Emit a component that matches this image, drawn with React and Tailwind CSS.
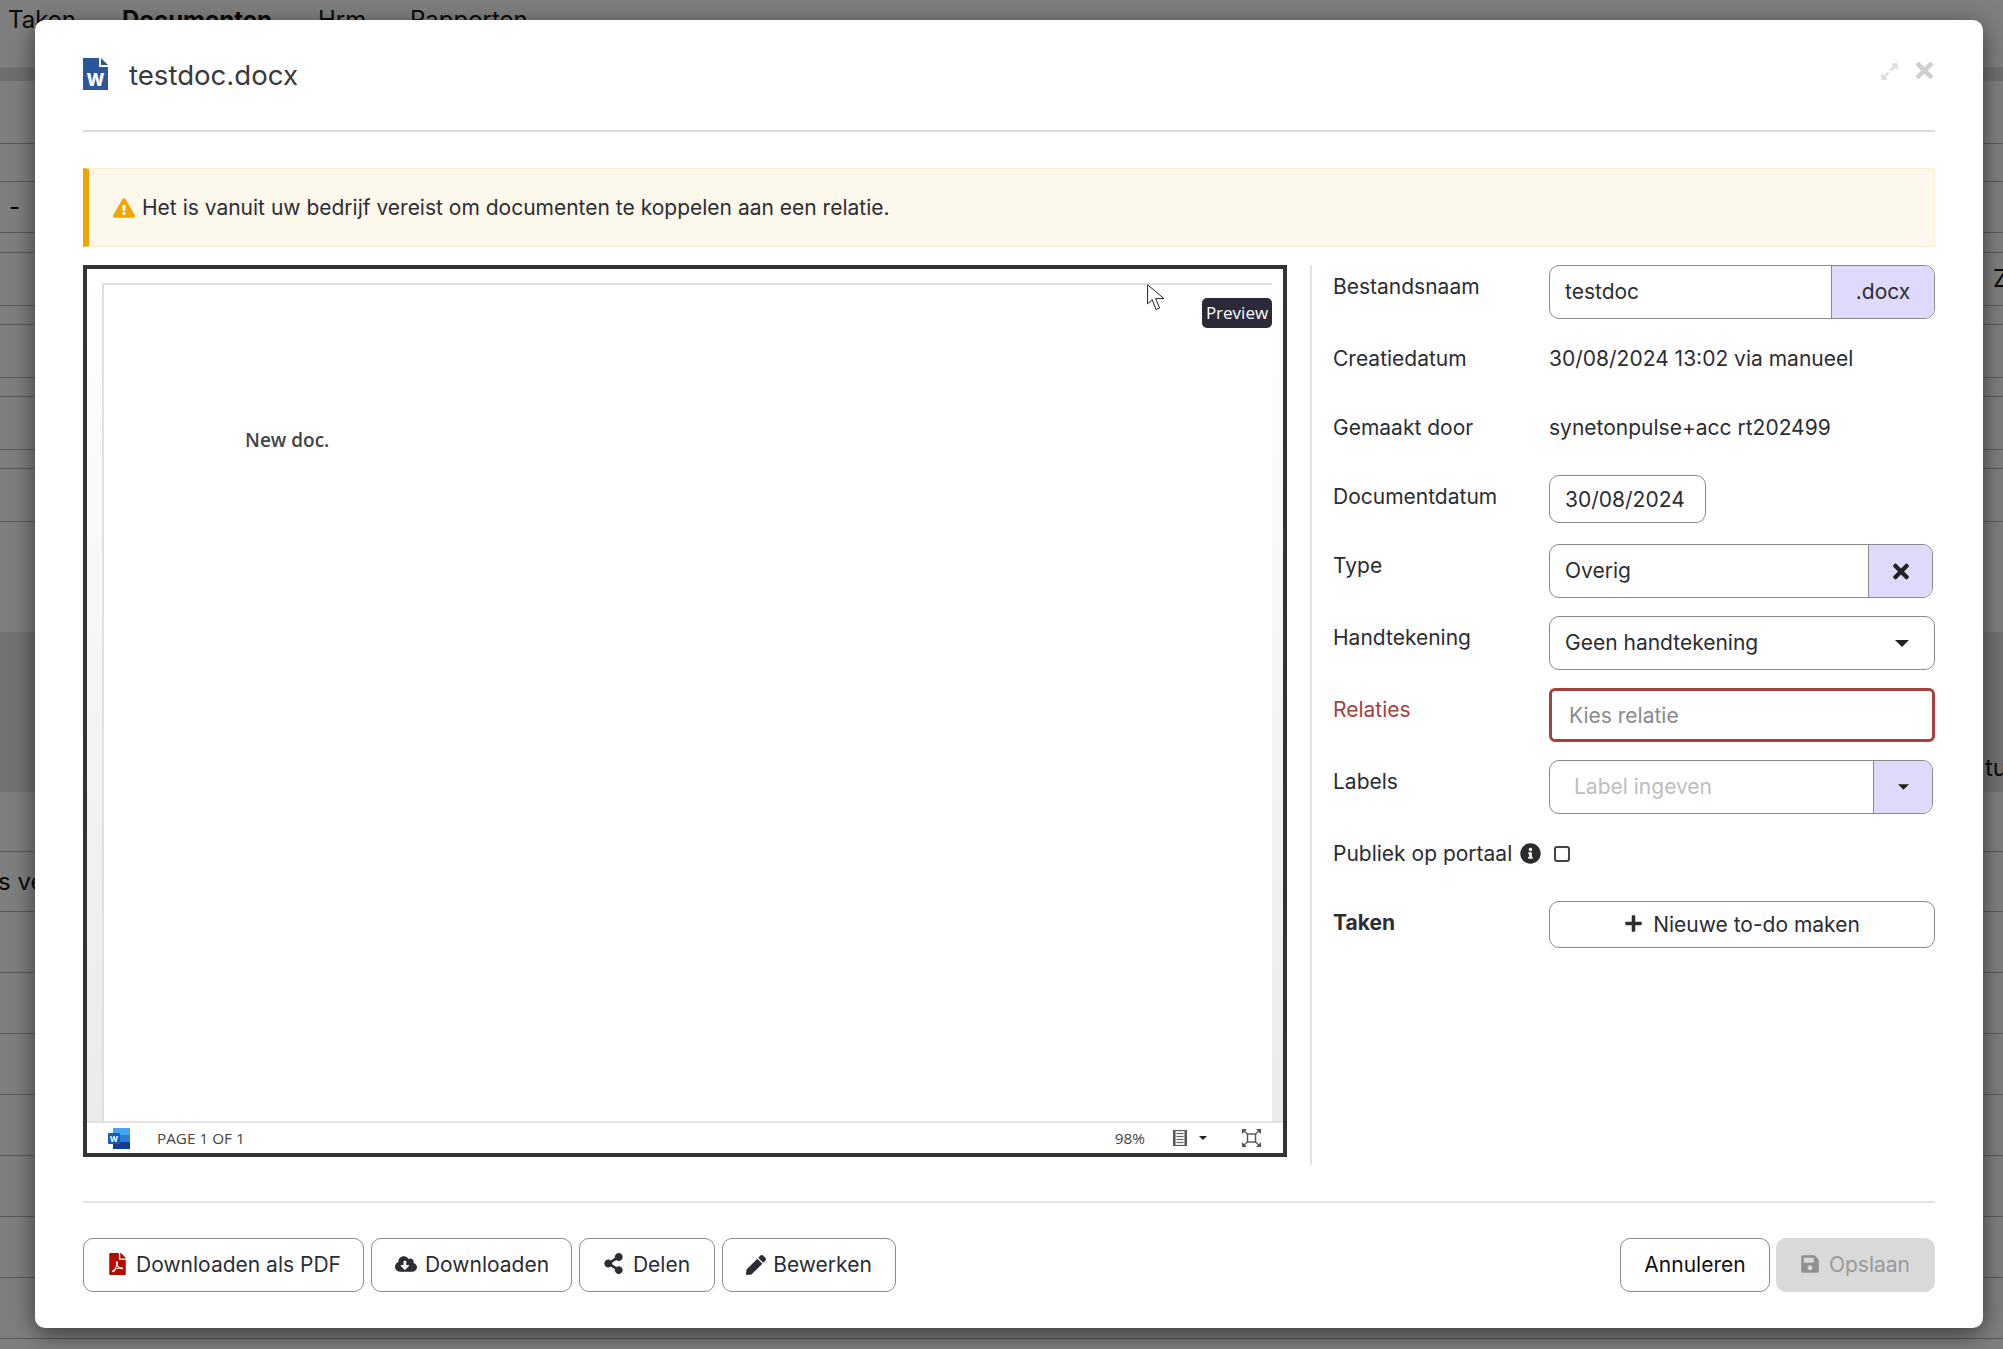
import {
  FaExclamationTriangle,
  FaExpandAlt,
  FaTimes,
  FaFilePdf,
  FaCloudDownloadAlt,
  FaShareAlt,
  FaPen,
  FaPlus,
  FaSave,
  FaInfoCircle,
} from "react-icons/fa";

// rows of the page behind the modal, only the outer edges stay visible
const backRows = [
  { h: "h-[63px]" },
  { h: "h-[38px]" },
  { h: "h-[51px]", left: "-   T", leftClass: "pl-[9px]" },
  { h: "h-[20px]" },
  { h: "h-[53px]", right: "Z", rightW: "w-[10px]" },
  { h: "h-[19px]" },
  { h: "h-[53px]" },
  { h: "h-[19px]" },
  { h: "h-[53px]" },
  { h: "h-[19px]" },
  { h: "h-[53px]" },
  { h: "h-[110px]", plain: true },
  { h: "h-[160px] pb-[6px]", dark: true, plain: true, right: "tu", rightW: "w-[18px]", end: true },
  { h: "h-[60px]" },
  { h: "h-[60px]", left: "s ve", leftClass: "-ml-[2px]" },
  { h: "h-[61px]" },
  { h: "h-[61px]" },
  { h: "h-[61px]" },
  { h: "h-[61px]" },
  { h: "h-[61px]" },
  { h: "h-[61px]" },
  { h: "h-[61px]" },
];

function Background() {
  return (
    <div className="w-[2003px] h-[1349px] overflow-hidden bg-white text-[#111]">
      <div className="flex h-[44px] items-start pt-[4px] pl-[8px] text-[24px] leading-[32px]">
        <span className="w-[114px]">Taken</span>
        <span className="w-[196px] font-bold">Documenten</span>
        <span className="w-[92px]">Hrm</span>
        <span>Rapporten</span>
      </div>
      <div className="h-[23px]" />
      <div className="h-[14px] bg-[#dedede]" />
      {backRows.map((r, i) => (
        <div
          key={i}
          className={`flex justify-between text-[24px] ${r.end ? "items-end" : "items-center"} ${r.h} ${r.plain ? "" : "border-b border-[#b4b4b4]"} ${r.dark ? "bg-[#e4e4e4]" : ""}`}
        >
          <span className={`whitespace-pre ${r.leftClass || ""}`}>{r.left}</span>
          {r.right && <span className={`${r.rightW} overflow-hidden`}>{r.right}</span>}
        </div>
      ))}
    </div>
  );
}

function WordFile() {
  return (
    <svg viewBox="0 0 25 32" className="w-[25px] h-[32px] shrink-0">
      <path d="M0 0H16V9H25V32H0Z" fill="#2b579a" />
      <path d="M18 0L25 7H18Z" fill="#2b579a" />
      <text x="12.5" y="28" textAnchor="middle" fill="#fff" fontSize="17" fontWeight="800" fontFamily="Inter, sans-serif">
        W
      </text>
    </svg>
  );
}

function WordLogo() {
  return (
    <svg viewBox="0 0 22 21" className="w-[22px] h-[21px]">
      <rect x="5" y="0" width="17" height="7" fill="#41a5ee" />
      <rect x="5" y="7" width="17" height="7" fill="#2b7cd3" />
      <rect x="5" y="14" width="17" height="7" fill="#103f91" />
      <rect x="0" y="5" width="12" height="11" rx="1" fill="#185abd" />
      <text x="6" y="14" textAnchor="middle" fill="#fff" fontSize="8" fontWeight="700" fontFamily="Inter, sans-serif">
        W
      </text>
    </svg>
  );
}

function Cursor() {
  return (
    <svg viewBox="0 0 18 27" className="w-[18px] h-[27px]">
      <path
        d="M0.6 0.8V19.8L5.2 15.6L9 25.6L12.6 24L8.6 14.6H17Z"
        fill="#fff"
        stroke="#222"
        strokeWidth="1"
        strokeLinejoin="round"
      />
    </svg>
  );
}

function PageViewIcon() {
  return (
    <svg viewBox="0 0 14 16" className="w-[14px] h-[16px]">
      <rect x="0.5" y="0.5" width="13" height="15" fill="#eee" stroke="#555" />
      <path d="M0 0H2.5V16H0ZM11.5 0H14V16H11.5Z" fill="#555" />
      <path d="M3.5 3.5H10.5M3.5 6.5H10.5M3.5 9.5H10.5M3.5 12.5H10.5" stroke="#666" strokeWidth="1" />
    </svg>
  );
}

function FitIcon() {
  return (
    <svg viewBox="0 0 19 18" className="w-[19px] h-[18px]" fill="none" stroke="#555">
      <rect x="5.5" y="5" width="8" height="8" strokeWidth="1.4" />
      <path d="M1 1L5.5 5M18 1L13.5 5M18 17L13.5 13M1 17L5.5 13" strokeWidth="1.2" />
      <path d="M0 0H5L0 5ZM19 0H14L19 5ZM19 18H14L19 13ZM0 18H5L0 13Z" fill="#555" stroke="none" />
    </svg>
  );
}

function Caret({ className }) {
  return (
    <svg viewBox="0 0 14 7" className={className}>
      <path d="M0 0H14L7 7Z" fill="#222" />
    </svg>
  );
}

function Row({ label, labelClass = "", children }) {
  return (
    <div className="flex min-h-[51px] mb-[18px]">
      <div className={`w-[216px] shrink-0 pt-[7px] leading-[30px] ${labelClass}`}>{label}</div>
      <div className="flex-1 min-w-0">{children}</div>
    </div>
  );
}

function Btn({ icon, className = "", children }) {
  return (
    <button
      className={`flex h-[54px] items-center justify-center rounded-[10px] border border-[#8a8a8a] bg-white text-[#2b2d33] ${className}`}
    >
      {icon}
      {children}
    </button>
  );
}

export default function App() {
  return (
    <div className="relative w-[2003px] h-[1349px] overflow-hidden font-['Inter',sans-serif]">
      <Background />
      <div className="absolute inset-0 bg-black/50" />

      <div className="absolute left-[35px] top-[20px] w-[1948px] h-[1308px] rounded-[10px] bg-white px-[48px] text-[21px] text-[#2b2d33] shadow-[0_6px_24px_rgba(0,0,0,0.55)]">
        <div className="flex h-[112px] items-start border-b-2 border-[#dcdcdc] pt-[38px]">
          <WordFile />
          <h1 className="ml-[21px] text-[27.6px] leading-[34px] text-[#3a3a3a]">testdoc.docx</h1>
          <div className="ml-auto flex items-start gap-[17px] pt-[4px] pr-[2px]">
            <FaExpandAlt className="w-[19px] h-[19px] text-[#dedede]" />
            <FaTimes className="mt-[-4px] w-[17px] h-[25px] text-[#cfcfcf]" />
          </div>
        </div>

        <div className="mt-[36px] flex h-[79px] items-center border border-l-[6px] border-[#fdeccd] border-l-[#f0a500] bg-[#fdf8ec] pl-[24px]">
          <FaExclamationTriangle className="w-[22px] h-[20px] text-[#f0a500]" />
          <span className="ml-[7px]">Het is vanuit uw bedrijf vereist om documenten te koppelen aan een relatie.</span>
        </div>

        <div className="mt-[18px] flex h-[900px]">
          <div className="relative flex h-[892px] w-[1204px] shrink-0 flex-col border-4 border-[#333] bg-white">
            <div className="flex-1 bg-gradient-to-b from-white to-[#ebebe9] pt-[14px] pl-[15px] pr-[11px]">
              <div className="h-full border-l-2 border-t-2 border-[#dde0e4] bg-white pl-[141px] pt-[139px]">
                <span className="font-['Open_Sans',sans-serif] text-[19px] font-semibold text-[#444]">New doc.</span>
              </div>
            </div>
            <div className="flex h-[32px] items-center border-t-2 border-[#e2e2e2] bg-white pl-[21px] pr-[22px] font-['Open_Sans',sans-serif] text-[15.3px] text-[#444]">
              <WordLogo />
              <span className="ml-[27px]">PAGE 1 OF 1</span>
              <span className="ml-auto">98%</span>
              <span className="ml-[28px]">
                <PageViewIcon />
              </span>
              <Caret className="ml-[12px] w-[8px] h-[4px]" />
              <span className="ml-[35px]">
                <FitIcon />
              </span>
            </div>
            <div className="absolute left-[1060px] top-[15px]">
              <Cursor />
            </div>
            <div className="absolute right-[11px] top-[29px] flex h-[30px] w-[70px] items-center justify-center rounded-[5px] bg-[#2b2a38] font-['Open_Sans',sans-serif] text-[17px] text-white">
              Preview
            </div>
          </div>

          <div className="ml-[23px] w-[625px] min-w-0 border-l-2 border-[#e2e2e2] pl-[21px]">
            <Row label="Bestandsnaam">
              <div className="flex h-[54px] overflow-hidden rounded-[10px] border border-[#8a8a8a]">
                <input readOnly defaultValue="testdoc" className="min-w-0 flex-1 pl-[15px] outline-none" />
                <span className="flex w-[103px] items-center justify-center border-l border-[#8a8a8a] bg-[#dfd9fb]">.docx</span>
              </div>
            </Row>
            <Row label="Creatiedatum">
              <div className="pt-[7px] leading-[30px]">30/08/2024 13:02 via manueel</div>
            </Row>
            <Row label="Gemaakt door">
              <div className="pt-[7px] leading-[30px]">synetonpulse+acc rt202499</div>
            </Row>
            <Row label="Documentdatum">
              <input
                readOnly
                defaultValue="30/08/2024"
                className="h-[48px] w-[157px] rounded-[10px] border border-[#8a8a8a] pl-[15px] outline-none"
              />
            </Row>
            <Row label="Type">
              <div className="mr-[2px] flex h-[54px] overflow-hidden rounded-[10px] border border-[#8a8a8a]">
                <input readOnly defaultValue="Overig" className="min-w-0 flex-1 pl-[15px] outline-none" />
                <span className="flex w-[64px] items-center justify-center border-l border-[#8a8a8a] bg-[#dfd9fb]">
                  <FaTimes className="w-[16px] h-[23px] text-[#222]" />
                </span>
              </div>
            </Row>
            <Row label="Handtekening">
              <div className="flex h-[54px] items-center justify-between rounded-[10px] border border-[#8a8a8a] pl-[15px] pr-[25px]">
                <span>Geen handtekening</span>
                <Caret className="w-[14px] h-[7px]" />
              </div>
            </Row>
            <Row label="Relaties" labelClass="text-[#a94040]">
              <input
                readOnly
                placeholder="Kies relatie"
                className="h-[54px] w-full rounded-[6px] border-[3px] border-[#a94040] pl-[17px] outline-none placeholder:text-[#8a8a8a]"
              />
            </Row>
            <Row label="Labels">
              <div className="mr-[2px] flex h-[54px] overflow-hidden rounded-[10px] border border-[#8a8a8a]">
                <input readOnly placeholder="Label ingeven" className="min-w-0 flex-1 pl-[24px] outline-none placeholder:text-[#bdbdbd]" />
                <span className="flex w-[59px] items-center justify-center border-l border-[#8a8a8a] bg-[#dfd9fb]">
                  <Caret className="w-[11px] h-[6px]" />
                </span>
              </div>
            </Row>
            <div className="flex min-h-[51px] mb-[18px] items-start pt-[7px] leading-[30px]">
              <span>Publiek op portaal</span>
              <FaInfoCircle className="ml-[8px] mt-[4px] w-[21px] h-[21px] text-[#2b2b2b]" />
              <span className="ml-[13px] mt-[7px] inline-block h-[16px] w-[16px] rounded-[3px] border-2 border-[#444]" />
            </div>
            <Row label="Taken" labelClass="font-bold">
              <button className="flex h-[47px] w-full items-center justify-center rounded-[10px] border border-[#8a8a8a] bg-white pt-[1px]">
                <FaPlus className="mr-[10px] mb-[3px] w-[19px] h-[19px]" />
                Nieuwe to-do maken
              </button>
            </Row>
          </div>
        </div>

        <div className="mt-[36px] flex justify-between border-t-2 border-[#e2e2e2] pt-[35px]">
          <div className="flex gap-[7px]">
            <Btn className="w-[281px] pl-[3px]" icon={<FaFilePdf className="mr-[10px] mb-[2px] w-[17px] h-[22px] text-[#b30b00]" />}>
              Downloaden als PDF
            </Btn>
            <Btn className="w-[201px] pl-[1px]" icon={<FaCloudDownloadAlt className="mr-[8px] mb-[3px] w-[22px] h-[22px]" />}>
              Downloaden
            </Btn>
            <Btn className="w-[136px]" icon={<FaShareAlt className="mr-[10px] mb-[3px] w-[19px] h-[21px]" />}>
              Delen
            </Btn>
            <Btn className="w-[174px]" icon={<FaPen className="mr-[7px] w-[20px] h-[20px]" />}>
              Bewerken
            </Btn>
          </div>
          <div className="flex gap-[6px]">
            <Btn className="w-[150px] text-[#111]">Annuleren</Btn>
            <button className="flex h-[54px] w-[159px] items-center justify-center rounded-[10px] bg-[#d9d9d9] text-[#999]">
              <FaSave className="mr-[10px] mb-[3px] w-[18px] h-[20px] text-[#8f8f8f]" />
              Opslaan
            </button>
          </div>
        </div>
      </div>
    </div>
  );
}
